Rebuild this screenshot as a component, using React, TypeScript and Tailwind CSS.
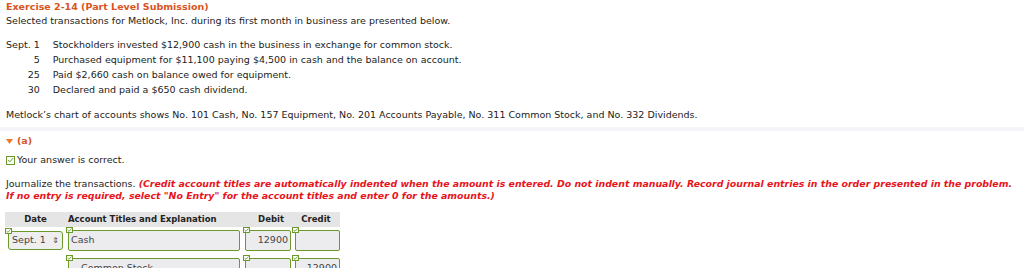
import React from "react";

function Tick({ className = "" }: { className?: string }) {
  return (
    <span className={"absolute w-[7px] h-[6px] border border-[#6b9a2a] bg-white flex items-center justify-center " + className}>
      <svg width="5" height="4" viewBox="0 0 5 4"><path d="M0.5 2 L2 3.3 L4.5 0.5" stroke="#6b9a2a" strokeWidth="0.9" fill="none" /></svg>
    </span>
  );
}

export default function App() {
  const font = { fontFamily: '"DejaVu Sans", Verdana, sans-serif' };
  return (
    <div className="w-[1024px] h-[268px] overflow-hidden bg-white text-[#222] text-[9.5px]" style={font}>
      <div className="px-[6px]">
        <div className="text-[#d9541f] font-bold leading-[14px]">Exercise 2-14 (Part Level Submission)</div>
        <div className="leading-[14px]">Selected transactions for Metlock, Inc. during its first month in business are presented below.</div>
        <div className="mt-[9px] grid grid-cols-[auto_1fr] gap-x-[13px] leading-[15px]">
          <div className="text-right whitespace-nowrap">Sept. 1</div><div>Stockholders invested $12,900 cash in the business in exchange for common stock.</div>
          <div className="text-right">5</div><div>Purchased equipment for $11,100 paying $4,500 in cash and the balance on account.</div>
          <div className="text-right">25</div><div>Paid $2,660 cash on balance owed for equipment.</div>
          <div className="text-right">30</div><div>Declared and paid a $650 cash dividend.</div>
        </div>
        <div className="mt-[11px] leading-[14px]">Metlock’s chart of accounts shows No. 101 Cash, No. 157 Equipment, No. 201 Accounts Payable, No. 311 Common Stock, and No. 332 Dividends.</div>
      </div>
      <div className="mt-[5px] h-[4px] bg-[#f3f5f9]" />
      <div className="pl-[6px]">
        <div className="mt-[3px] flex items-center gap-[4px] leading-[14px] text-[#d9541f] font-bold">
          <svg width="7" height="5" viewBox="0 0 7 5"><path d="M0 0 H7 L3.5 5 Z" fill="#f07a2a" /></svg>
          <span>(a)</span>
        </div>
        <div className="mt-[5px] flex items-center gap-[2px] leading-[14px]">
          <span className="w-[9px] h-[9px] border border-[#6b9a2a] flex items-center justify-center">
            <svg width="7" height="6" viewBox="0 0 7 6"><path d="M1 3 L3 4.8 L6 1.2" stroke="#6b9a2a" strokeWidth="1" fill="none" /></svg>
          </span>
          <span>Your answer is correct.</span>
        </div>
        <div className="mt-[11px] leading-[12px] whitespace-nowrap">
          Journalize the transactions.{" "}
          <span className="text-[#e8141c] font-bold italic text-[9.4px]">(Credit account titles are automatically indented when the amount is entered. Do not indent manually. Record journal entries in the order presented in the problem.<br />If no entry is required, select "No Entry" for the account titles and enter 0 for the amounts.)</span>
        </div>
      </div>
      <div className="ml-[5px] mt-[10px] w-[335px]">
        <div className="grid grid-cols-[61px_176px_50px_48px] bg-[#e5e5e5] h-[15px] items-center font-bold leading-[15px] text-[8.5px]">
          <div className="text-center">Date</div>
          <div className="pl-[2px]">Account Titles and Explanation</div>
          <div className="text-right pr-[8px]">Debit</div>
          <div className="text-center">Credit</div>
        </div>
        <div className="grid grid-cols-[61px_176px_50px_48px]">
          <div className="relative pt-[4px] pl-[3px]">
            <Tick className="left-0 top-[1px]" />
            <div className="h-[19px] w-[55px] border border-[#6b9a2a] rounded-[3px] bg-[#eeeeee] flex items-center justify-between px-[3px] text-[#444]">
              <span>Sept. 1</span><span className="text-[8px] leading-none">⇕</span>
            </div>
          </div>
          <div className="relative pt-[3px] pl-[2px]">
            <Tick className="left-[0px] top-0" />
            <div className="h-[21px] w-[172px] border border-[#6b9a2a] rounded-[2px] bg-[#ececee] flex items-center px-[2px] text-[#444]">Cash</div>
          </div>
          <div className="relative pt-[3px] pl-[3px]">
            <Tick className="left-[1px] top-0" />
            <div className="h-[21px] w-[46px] border border-[#6b9a2a] rounded-[2px] bg-[#ececee] flex items-center justify-end px-[2px] text-[#444]">12900</div>
          </div>
          <div className="relative pt-[3px] pl-[3px]">
            <Tick className="left-[0px] top-0" />
            <div className="h-[21px] w-[45px] border border-[#6b9a2a] rounded-[2px] bg-[#ececee]" />
          </div>
        </div>
        <div className="grid grid-cols-[61px_176px_50px_48px] mt-[4px]">
          <div />
          <div className="relative pt-[3px] pl-[2px]">
            <Tick className="left-[0px] top-0" />
            <div className="h-[21px] w-[172px] border border-[#6b9a2a] rounded-[2px] bg-[#ececee] flex items-center pl-[12px] text-[#444]">Common Stock</div>
          </div>
          <div className="relative pt-[3px] pl-[3px]">
            <Tick className="left-[1px] top-0" />
            <div className="h-[21px] w-[46px] border border-[#6b9a2a] rounded-[2px] bg-[#ececee]" />
          </div>
          <div className="relative pt-[3px] pl-[3px]">
            <Tick className="left-[0px] top-0" />
            <div className="h-[21px] w-[45px] border border-[#6b9a2a] rounded-[2px] bg-[#ececee] flex items-center justify-end px-[2px] text-[#444]">12900</div>
          </div>
        </div>
      </div>
    </div>
  );
}
